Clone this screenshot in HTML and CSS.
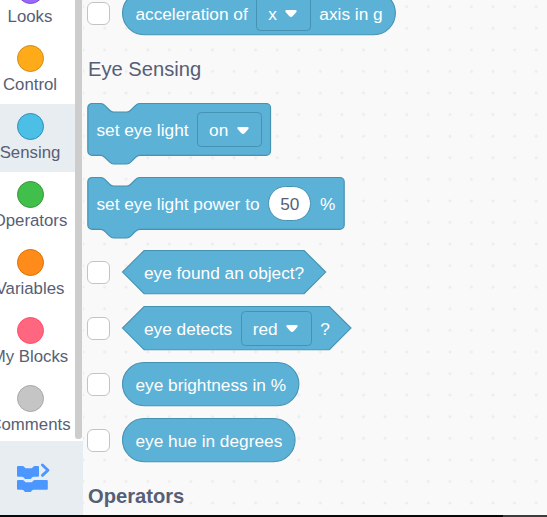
FILE: index.html
```
<!DOCTYPE html>
<html lang="en">
<head>
<meta charset="utf-8">
<title>Block palette</title>
<link rel="stylesheet" href="styles.css">
</head>
<body>
<div class="app">
  <aside class="sidebar">
    <nav class="categories">
      <div class="category"><span class="dot looks"></span><span class="name">Looks</span></div>
      <div class="category"><span class="dot control"></span><span class="name">Control</span></div>
      <div class="category selected"><span class="dot sensing"></span><span class="name">Sensing</span></div>
      <div class="category"><span class="dot operators"></span><span class="name">Operators</span></div>
      <div class="category"><span class="dot variables"></span><span class="name">Variables</span></div>
      <div class="category"><span class="dot myblocks"></span><span class="name">My Blocks</span></div>
      <div class="category"><span class="dot comments"></span><span class="name">Comments</span></div>
    </nav>
    <div class="track"><div class="thumb"></div></div>
    <div class="extensions">
      <svg class="ext-icon" width="36" height="32" viewBox="0 0 36 32">
        <g fill="#4c97ff">
          <path d="M2 4h4.500q1 0 1.800 1l.7.800q.5.500 1.300.500h4.700q.8 0 1.300-.5l.7-.8q.800-1 1.800-1h3.200q1 0 1 1v8.700q0 1-1 1h-4.300q-1 0-1.800.9l-.7.800q-.5.500-1.300.5h-4.100q-.8 0-1.300-.5l-.7-.8q-.8-.9-1.800-.9h-4q-1 0-1-1V5q0-1 1-1z"/>
          <path d="M2 18h4.500q1 0 1.800 1l.7.700q.5.500 1.300.500h4.700q.8 0 1.300-.5l.7-.7q.800-1 1.800-1h12q1 0 1 1v7.700q0 1-1 1h-13.100q-1 0-1.800.9l-.7.800q-.5.500-1.300.5h-4.100q-.8 0-1.300-.5l-.7-.8q-.8-.9-1.800-.9h-4q-1 0-1-1V19q0-1 1-1z"/>
        </g>
        <path d="M26.400 3 32 8.200 26.400 13.400" fill="none" stroke="#4c97ff" stroke-width="2.800" stroke-linecap="round" stroke-linejoin="round"/>
      </svg>
    </div>
  </aside>

  <main class="palette">
    <svg class="grid" width="464" height="515">
      <defs>
        <pattern id="marks" x="-10.790" y="-4.090" width="21.580" height="21.580" patternUnits="userSpaceOnUse">
          <path d="M9.290 10.790h3M10.790 9.290v3" stroke="#e8e8e8" stroke-width="1"/>
        </pattern>
      </defs>
      <rect width="464" height="515" fill="url(#marks)"/>
    </svg>
    <div class="blocks">
      <div class="row first">
        <span class="check"></span>
        <div class="block round">
          <svg class="shape" width="275" height="44"><rect x=".500" y=".500" width="272.900" height="43.200" rx="21.600"/></svg>
          <span class="text">acceleration of</span>
          <span class="drop"><span class="text">x</span><svg class="caret" width="12" height="9"><path d="M1.500 1h9q1.700.300.900 1.900L7.600 7.300q-1.600 1.400-3.200 0L.600 2.900Q-.200 1.300 1.500 1z"/></svg></span>
          <span class="text">axis in g</span>
        </div>
      </div>

      <h2 class="heading">Eye Sensing</h2>

      <div class="row stmt-row">
        <div class="block stmt">
          <svg class="shape" width="184" height="62"><path transform="translate(.800 .500) scale(1.080)" d="M0 4a4 4 0 0 1 4-4h8c2 0 3 1 4 2l4 4c1 1 2 2 4 2h12c2 0 3-1 4-2l4-4c1-1 2-2 4-2H165.200a4 4 0 0 1 4 4v40a4 4 0 0 1-4 4H48c-2 0-3 1-4 2l-4 4c-1 1-2 2-4 2H24c-2 0-3-1-4-2l-4-4c-1-1-2-2-4-2H4a4 4 0 0 1-4-4z"/></svg>
          <span>set eye light</span>
          <span class="drop"><span>on</span><svg class="caret" width="12" height="9"><path d="M1.500 1h9q1.700.300.900 1.900L7.600 7.300q-1.600 1.400-3.200 0L.600 2.900Q-.200 1.300 1.500 1z"/></svg></span>
        </div>
      </div>

      <div class="row stmt-row second">
        <div class="block stmt">
          <svg class="shape" width="258" height="62"><path transform="translate(.800 .500) scale(1.080)" d="M0 4a4 4 0 0 1 4-4h8c2 0 3 1 4 2l4 4c1 1 2 2 4 2h12c2 0 3-1 4-2l4-4c1-1 2-2 4-2H233.400a4 4 0 0 1 4 4v40a4 4 0 0 1-4 4H48c-2 0-3 1-4 2l-4 4c-1 1-2 2-4 2H24c-2 0-3-1-4-2l-4-4c-1-1-2-2-4-2H4a4 4 0 0 1-4-4z"/></svg>
          <span>set eye light power to</span>
          <span class="number">50</span>
          <span>%</span>
        </div>
      </div>

      <div class="row after-stmt">
        <span class="check"></span>
        <div class="block hex">
          <svg class="shape" width="206" height="44"><path d="M22.100.500H182.100L203.700 22.100 182.100 43.700H22.100L.500 22.100z"/></svg>
          <span class="text">eye found an object?</span>
        </div>
      </div>

      <div class="row">
        <span class="check"></span>
        <div class="block hex">
          <svg class="shape" width="231" height="44"><path d="M22.100.500H207.400L229 22.100 207.400 43.700H22.100L.500 22.100z"/></svg>
          <span class="text">eye detects</span>
          <span class="drop"><span class="text">red</span><svg class="caret" width="12" height="9"><path d="M1.500 1h9q1.700.300.900 1.900L7.600 7.300q-1.600 1.400-3.200 0L.600 2.900Q-.200 1.300 1.500 1z"/></svg></span>
          <span class="text">?</span>
        </div>
      </div>

      <div class="row">
        <span class="check"></span>
        <div class="block round">
          <svg class="shape" width="179" height="44"><rect x=".500" y=".500" width="176.400" height="43.200" rx="21.600"/></svg>
          <span class="text">eye brightness in %</span>
        </div>
      </div>

      <div class="row">
        <span class="check"></span>
        <div class="block round">
          <svg class="shape" width="175" height="44"><rect x=".500" y=".500" width="172.600" height="43.200" rx="21.600"/></svg>
          <span class="text">eye hue in degrees</span>
        </div>
      </div>

      <h2 class="heading bold">Operators</h2>
    </div>
  </main>
</div>
<footer class="edge"><span></span></footer>
</body>
</html>
```

FILE: styles.css
```
* { box-sizing: border-box; }

body {
  margin: 0;
  width: 547px;
  height: 517px;
  overflow: hidden;
  background: #f9f9f9;
  font-family: "Liberation Sans", Arial, sans-serif;
  color: #575e75;
}

.app { display: flex; height: 515px; overflow: hidden; }

.sidebar {
  display: grid;
  grid-template-columns: 75px 8px;
  grid-template-rows: 441px 74px;
  width: 83px;
  flex: none;
}

.categories {
  display: flex;
  flex-direction: column;
  background: #fff;
  overflow: hidden;
}

.category {
  display: flex;
  flex-direction: column;
  align-items: center;
  flex: none;
  width: 89px;
  height: 68px;
  margin-left: -14px;
  padding-top: 9px;
}

.category:first-child { margin-top: -32px; }
.selected { background: #e8edf1; }

.dot {
  width: 27px;
  height: 27px;
  border: 1px solid;
  border-radius: 50%;
}

.looks { background: #9966ff; border-color: #774dcb; }
.control { background: #ffab19; border-color: #cf8b17; }
.sensing { background: #4cbfe6; border-color: #2e8eb8; }
.operators { background: #40bf4a; border-color: #389438; }
.variables { background: #ff8c1a; border-color: #db6e00; }
.myblocks { background: #ff6680; border-color: #ff4d6a; }
.comments { background: #c5c5c5; border-color: #a8a8a8; }

.name {
  margin: 3px 1px 0 0;
  font-size: 16.800px;
  line-height: 20px;
  white-space: nowrap;
}

.track { background: #fff; width: 7px; }
.thumb { height: 439px; background: #cdcdcd; border-radius: 0 0 3px 3px; }

.extensions { grid-column: 1 / 3; background: #e8edf1; padding: 21px 0 0 16px; }
.ext-icon { display: block; }

.palette { position: relative; flex: 1; background: #f9f9f9; }
.grid { position: absolute; left: 0; top: 0; }
.blocks { position: relative; display: flex; flex-direction: column; padding-left: 4px; }

.row { display: flex; align-items: center; height: 44px; margin-bottom: 12px; }
.first { margin: -9px 0 0; }
.stmt-row { height: 53px; margin-bottom: 21px; }
.second { margin-bottom: 20px; }

.check {
  width: 23px;
  height: 23px;
  margin: 0 12px 0 0;
  border: 1px solid #c4c4c4;
  border-radius: 6px;
  background: #fff;
}

.block {
  position: relative;
  display: flex;
  align-items: center;
  gap: 8.640px;
  height: 100%;
  font-size: 17.280px;
  line-height: 20px;
  white-space: nowrap;
  color: #fff;
}

.block > span { position: relative; }
.block .text { padding-top: 2px; }
.round { padding-left: 13.400px; }
.hex { padding-left: 21.900px; }
.stmt { padding-left: 9.400px; }

.shape {
  position: absolute;
  left: 0;
  top: 0;
  overflow: visible;
  fill: #5cb1d6;
  stroke: #4692b2;
  stroke-width: 1.080px;
}

.drop {
  display: flex;
  align-items: center;
  gap: 8.400px;
  height: 35px;
  padding: 0 12.500px 0 10.900px;
  border: 1px solid #4692b2;
  border-radius: 4.300px;
}

.caret { fill: #fff; margin-top: 1px; }

.number {
  width: 43.200px;
  height: 35px;
  border: 1px solid #4692b2;
  border-radius: 17.500px;
  background: #fff;
  color: #575e75;
  text-align: center;
  line-height: 34px;
}

.heading {
  margin: 0;
  padding-left: 1px;
  height: 68px;
  font-size: 20.160px;
  font-weight: 400;
  line-height: 68px;
}

.bold { height: 44px; line-height: 44px; font-weight: 700; }

.edge { height: 2px; display: flex; justify-content: flex-end; background: #080808; }
.edge span { width: 44px; background: #3c3c3c; }
```
